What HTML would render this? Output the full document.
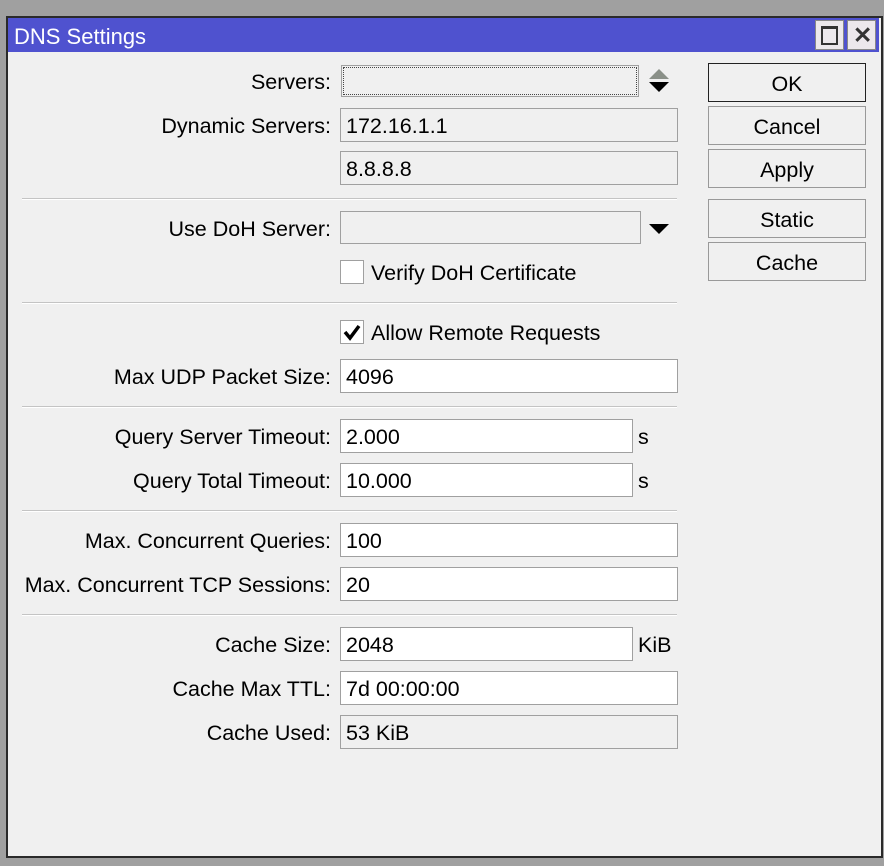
<!DOCTYPE html>
<html><head><style>
body{margin:0;width:884px;height:866px;background:#a0a0a0;position:relative;overflow:hidden;font-family:"Liberation Sans",sans-serif;font-size:21.5px;color:#000}
.a{position:absolute}
.win{left:6px;top:16px;width:873px;height:838px;background:#f0f0f0;border:2px solid #2a2a2a}
.title{left:8px;top:18px;width:871px;height:34px;background:#4f52cf;color:#fff}
.lbl{right:553px;text-align:right;white-space:nowrap;line-height:36px;height:34px}
.f{left:340px;width:331px;height:32px;border:1px solid #a0a0a0;background:#fff;line-height:35px;padding-left:5px}
.ro{background:#f0f0f0}
.sep{left:22px;width:655px;height:1px;background:#c4c4c4;border-bottom:1px solid #fff}
.btn{left:708px;width:156px;height:37px;border:1px solid #999;background:#f0f0f0;text-align:center;line-height:40px}
.unit{left:638px;line-height:36px}
.tb{top:20px;width:27px;height:28px;background:#ece8ec;border:1px solid #888}
</style></head><body>
<div class="a win"></div>
<div class="a title"><span class="a" style="left:6px;top:0;line-height:38px;font-size:22px">DNS Settings</span></div>
<div class="a tb" style="left:815px"><div class="a" style="left:5px;top:5px;width:13px;height:14px;border:2px solid #333;border-top-width:3px"></div></div>
<div class="a tb" style="left:847px"><span class="a" style="left:5px;top:1px;font-size:23px;font-weight:bold;color:#333">✕</span></div>

<div class="a lbl" style="top:64px">Servers:</div>
<div class="a f ro" style="left:341px;top:65px;width:296px;height:30px;padding:0;border:1px solid #a0a0a0;outline:1px dotted #444;outline-offset:-3px"></div>
<svg class="a" style="left:648px;top:68px" width="22" height="26"><polygon points="1,11 11,1 21,11" fill="#8a9088"/><polygon points="1,14 21,14 11,24" fill="#000"/></svg>
<div class="a lbl" style="top:108px">Dynamic Servers:</div>
<div class="a f ro" style="top:108px">172.16.1.1</div>
<div class="a f ro" style="top:151px">8.8.8.8</div>
<div class="a sep" style="top:198px"></div>
<div class="a lbl" style="top:211px">Use DoH Server:</div>
<div class="a f ro" style="top:211px;width:299px;height:31px;padding:0"></div>
<svg class="a" style="left:649px;top:224px" width="20" height="12"><polygon points="0,0 20,0 10,10" fill="#000"/></svg>
<div class="a" style="left:340px;top:260px;width:22px;height:22px;border:1px solid #a0a0a0;background:#fff"></div>
<div class="a" style="left:371px;top:260px;line-height:26px">Verify DoH Certificate</div>
<div class="a sep" style="top:302px"></div>
<div class="a" style="left:340px;top:320px;width:22px;height:22px;border:1px solid #a0a0a0;background:#fff"><svg width="22" height="22"><path d="M4 11 L9 17 L18 5" stroke="#000" stroke-width="3.5" fill="none"/></svg></div>
<div class="a" style="left:371px;top:320px;line-height:26px">Allow Remote Requests</div>
<div class="a lbl" style="top:359px">Max UDP Packet Size:</div>
<div class="a f" style="top:359px">4096</div>
<div class="a sep" style="top:406px"></div>
<div class="a lbl" style="top:419px">Query Server Timeout:</div>
<div class="a f" style="top:419px;width:286px">2.000</div>
<div class="a unit" style="top:419px">s</div>
<div class="a lbl" style="top:463px">Query Total Timeout:</div>
<div class="a f" style="top:463px;width:286px">10.000</div>
<div class="a unit" style="top:463px">s</div>
<div class="a sep" style="top:510px"></div>
<div class="a lbl" style="top:523px">Max. Concurrent Queries:</div>
<div class="a f" style="top:523px">100</div>
<div class="a lbl" style="top:567px">Max. Concurrent TCP Sessions:</div>
<div class="a f" style="top:567px">20</div>
<div class="a sep" style="top:614px"></div>
<div class="a lbl" style="top:627px">Cache Size:</div>
<div class="a f" style="top:627px;width:286px">2048</div>
<div class="a unit" style="top:627px">KiB</div>
<div class="a lbl" style="top:671px">Cache Max TTL:</div>
<div class="a f" style="top:671px">7d 00:00:00</div>
<div class="a lbl" style="top:715px">Cache Used:</div>
<div class="a f ro" style="top:715px">53 KiB</div>

<div class="a btn" style="top:63px;border-color:#222">OK</div>
<div class="a btn" style="top:106px">Cancel</div>
<div class="a btn" style="top:149px">Apply</div>
<div class="a btn" style="top:199px">Static</div>
<div class="a btn" style="top:242px">Cache</div>
</body></html>
